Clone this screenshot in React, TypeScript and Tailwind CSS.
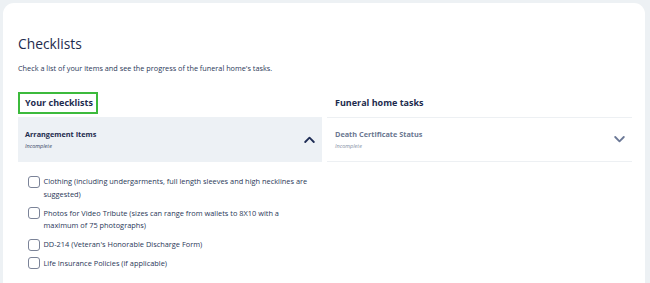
import { useState } from "react";

const items = [
  "Clothing (including undergarments, full length sleeves and high necklines are suggested)",
  "Photos for Video Tribute (sizes can range from wallets to 8X10 with a maximum of 75 photographs)",
  "DD-214 (Veteran's Honorable Discharge Form)",
  "Life Insurance Policies (if applicable)",
];

function Chevron({ up, className }: { up?: boolean; className?: string }) {
  return (
    <svg width="11" height="7" viewBox="0 0 11 7" fill="none" className={className}>
      <path
        d={up ? "M1.2 6 L5.5 1.6 L9.8 6" : "M1.2 1 L5.5 5.4 L9.8 1"}
        stroke="currentColor"
        strokeWidth="1.8"
        strokeLinecap="round"
        strokeLinejoin="round"
      />
    </svg>
  );
}

export default function App() {
  const [checked, setChecked] = useState<boolean[]>(items.map(() => false));

  return (
    <div
      className="min-h-[283px] w-[650px] overflow-hidden bg-[#edf1f4] pl-[3px] pt-[3px]"
      style={{ fontFamily: '"Open Sans", "Noto Sans", sans-serif' }}
    >
      <div className="h-[290px] w-[642px] rounded-t-[11px] bg-white px-[15px] pt-[32px] text-[#1d2b4e]">
        <h1 className="text-[13.8px] leading-[18px] font-normal">Checklists</h1>
        <p className="mt-[10px] text-[7.3px] leading-[10px] text-[#2a3758]">
          Check a list of your items and see the progress of the funeral home's tasks.
        </p>

        <div className="mt-[19px] grid grid-cols-[304px_305px] gap-x-[5px]">
          <div>
            <div className="flex h-[22px] w-fit items-center border-2 border-[#3cba3c] pl-[5px] pr-[3px] text-[9px] leading-[12px] font-bold">
              Your checklists
            </div>
            <div className="mt-[3px] flex h-[45px] items-center justify-between bg-[#edf1f5] pl-[7px] pr-[7px]">
              <div>
                <div className="text-[7.3px] leading-[11px] font-bold">Arrangement Items</div>
                <div className="mt-[3px] text-[5.5px] leading-[7px] italic text-[#3a4665]">Incomplete</div>
              </div>
              <Chevron up className="text-[#1f2d55]" />
            </div>
            <ul className="flex flex-col gap-[6px] pl-[10px] pr-[10px] pt-[13px]">
              {items.map((text, i) => (
                <li key={text} className="flex items-start gap-[3.5px]">
                  <button
                    type="button"
                    onClick={() => setChecked((c) => c.map((v, j) => (j === i ? !v : v)))}
                    className={`mt-[0.5px] h-[12px] w-[12px] shrink-0 rounded-[3px] border border-[#7b8398] ${
                      checked[i] ? "bg-[#1f2d55]" : "bg-white"
                    }`}
                    aria-label={text}
                  />
                  <span className="text-[7.4px] leading-[12.8px] text-[#2a3758]">{text}</span>
                </li>
              ))}
            </ul>
          </div>

          <div>
            <div className="flex h-[22px] items-center pl-[8px] text-[9px] leading-[12px] font-bold">
              Funeral home tasks
            </div>
            <div className="mt-[3px] flex h-[45px] items-center justify-between border-y border-[#edf0f3] pl-[8px] pr-[7px]">
              <div>
                <div className="text-[7.3px] leading-[11px] font-bold text-[#6b7791]">Death Certificate Status</div>
                <div className="mt-[3px] text-[5.5px] leading-[7px] italic text-[#8590a5]">Incomplete</div>
              </div>
              <Chevron className="text-[#6b7896]" />
            </div>
          </div>
        </div>
      </div>
    </div>
  );
}
